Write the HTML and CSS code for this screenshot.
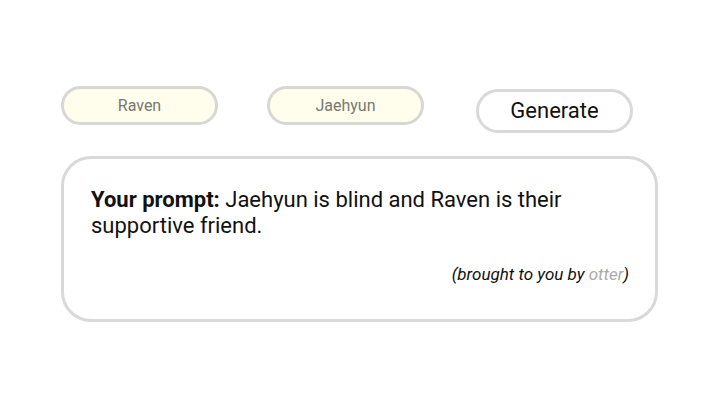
FILE: index.html
```html
<!DOCTYPE html>
<html>
<head>
<meta charset="utf-8">
<link rel="stylesheet" href="styles.css">
</head>
<body>
<main class="page">
  <div class="controls">
    <div class="name-pill name-a">Raven</div>
    <div class="name-pill name-b">Jaehyun</div>
    <button class="generate">Generate</button>
  </div>
  <section class="card">
    <p class="prompt"><strong>Your prompt:</strong> Jaehyun is blind and Raven is their supportive friend.</p>
    <p class="credit">(brought to you by <span class="otter">otter</span>)</p>
  </section>
</main>
</body>
</html>
```
FILE: styles.css
```css
html, body {
  margin: 0;
  padding: 0;
  background: #ffffff;
}
body {
  font-family: Roboto, "Liberation Sans", sans-serif;
  color: #111;
}
.page {
  width: 597px;
  margin: 0 0 0 61px;
  padding-top: 86px;
}
.controls {
  display: flex;
  align-items: flex-start;
  height: 70px;
}
.name-pill {
  box-sizing: border-box;
  width: 157px;
  height: 39px;
  border: 3px solid #d7d7d4;
  border-radius: 20px;
  background: #fffeec;
  color: #787770;
  font-size: 16px;
  display: flex;
  align-items: center;
  justify-content: center;
}
.name-b {
  margin-left: 49px;
}
.generate {
  box-sizing: border-box;
  margin-left: 52px;
  margin-top: 3px;
  width: 157px;
  height: 44px;
  border: 3px solid #d9d9d9;
  border-radius: 22px;
  background: #ffffff;
  font-family: Roboto, "Liberation Sans", sans-serif;
  font-size: 22px;
  color: #111;
  padding: 0 0 2px 0;
}
.card {
  box-sizing: border-box;
  width: 597px;
  height: 166px;
  border: 3px solid #d9d9d9;
  border-radius: 30px;
  padding: 28px 26px 0 27px;
}
.prompt {
  margin: 0;
  font-size: 22px;
  line-height: 26px;
  color: #111;
}
.prompt strong {
  font-weight: 700;
}
.credit {
  margin: 25px 0 0 0;
  text-align: right;
  font-style: italic;
  font-size: 17px;
  line-height: 20px;
  color: #111;
}
.otter {
  color: #a9a9a9;
}
```
